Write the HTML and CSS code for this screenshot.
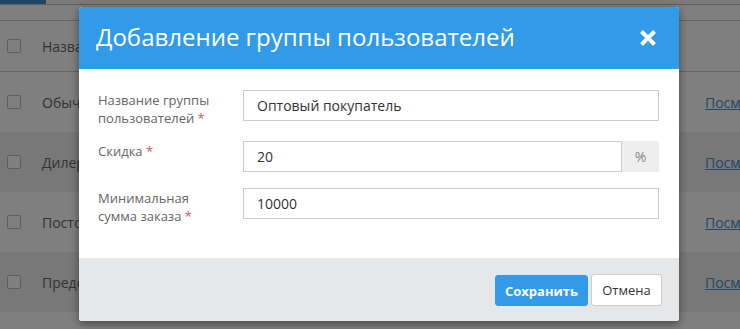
FILE: index.html
```html
<!DOCTYPE html>
<html lang="ru">
<head>
<meta charset="utf-8">
<title>Группы пользователей</title>
<link rel="stylesheet" href="styles.css">
</head>
<body>
<div class="page">
  <div class="topbar"><div class="tab"></div></div>
  <div class="table">
    <div class="row head">
      <div class="cell-check"><span class="checkbox"></span></div>
      <div class="cell-name">Название</div>
      <div class="cell-link"></div>
    </div>
    <div class="row">
      <div class="cell-check"><span class="checkbox"></span></div>
      <div class="cell-name">Обычный</div>
      <div class="cell-link"><a href="#">Посмотреть</a></div>
    </div>
    <div class="row alt">
      <div class="cell-check"><span class="checkbox"></span></div>
      <div class="cell-name">Дилер</div>
      <div class="cell-link"><a href="#">Посмотреть</a></div>
    </div>
    <div class="row">
      <div class="cell-check"><span class="checkbox"></span></div>
      <div class="cell-name">Постоянный</div>
      <div class="cell-link"><a href="#">Посмотреть</a></div>
    </div>
    <div class="row alt">
      <div class="cell-check"><span class="checkbox"></span></div>
      <div class="cell-name">Предоплата</div>
      <div class="cell-link"><a href="#">Посмотреть</a></div>
    </div>
    <div class="row tail"></div>
  </div>
</div>

<div class="overlay"></div>

<div class="modal">
  <div class="modal-header">
    <h1 class="modal-title">Добавление группы пользователей</h1>
    <button class="close" type="button" aria-label="Закрыть">
      <svg width="18" height="18" viewBox="0 0 18 18"><path d="M2.5 2.5L15.5 15.5M15.5 2.5L2.5 15.5" stroke="#fff" stroke-width="4" fill="none"/></svg>
    </button>
  </div>
  <div class="modal-body">
    <div class="form-row first">
      <label class="form-label">Название группы пользователей <span class="req">*</span></label>
      <div class="field"><input class="input" type="text" value="Оптовый покупатель"></div>
    </div>
    <div class="form-row">
      <label class="form-label">Скидка <span class="req">*</span></label>
      <div class="field group"><input class="input" type="text" value="20"><span class="addon">%</span></div>
    </div>
    <div class="form-row last">
      <label class="form-label">Минимальная сумма заказа <span class="req">*</span></label>
      <div class="field"><input class="input" type="text" value="10000"></div>
    </div>
  </div>
  <div class="modal-footer">
    <button class="btn btn-primary" type="button">Сохранить</button>
    <button class="btn btn-default" type="button">Отмена</button>
  </div>
</div>
</body>
</html>
```
FILE: styles.css
```css
html, body {
  margin: 0;
  padding: 0;
  height: 100%;
}
body {
  font-family: "Open Sans", "Noto Sans", sans-serif;
  background: #fff;
  overflow: hidden;
}
.page {
  width: 740px;
}
.topbar {
  height: 4px;
  border-bottom: 1px solid #bdbdbd;
  background: #f4f4f4;
}
.tab {
  width: 46px;
  height: 4px;
  background: #3c88cc;
}
.table {
  margin-top: 15px;
  border-top: 1px solid #c8c8c8;
}
.row {
  display: flex;
  align-items: center;
  height: 60px;
  font-size: 14px;
  color: #666;
}
.row.alt {
  background: #f0f0f0;
}
.row.tail {
  height: 17px;
}
.row.head {
  height: 50px;
  border-bottom: 1px solid #c8c8c8;
}
.cell-check {
  width: 35px;
  padding-left: 7px;
  display: flex;
  align-items: center;
}
.checkbox {
  width: 12px;
  height: 12px;
  border: 1px solid #bbb;
  border-radius: 2px;
  background: #fff;
}
.cell-name {
  flex: 1;
}
.cell-link {
  width: 35px;
  overflow: hidden;
  white-space: nowrap;
}
.cell-link a {
  color: #4a8fd0;
  text-decoration: underline;
}
.overlay {
  position: absolute;
  left: 0;
  top: 0;
  width: 100%;
  height: 100%;
  background: rgba(0, 0, 0, 0.5);
}
.modal {
  position: absolute;
  left: 79px;
  top: 7px;
  width: 600px;
  background: #fff;
  border-radius: 3px;
  box-shadow: 0 3px 9px rgba(0, 0, 0, 0.45);
  overflow: hidden;
}
.modal-header {
  height: 62px;
  background: #319bea;
  display: flex;
  align-items: center;
  justify-content: space-between;
  padding: 0 22px 0 17px;
}
.modal-title {
  margin: 0;
  font-size: 24px;
  font-weight: 400;
  color: #fff;
  line-height: 32px;
  position: relative;
  top: -1px;
}
.close {
  border: 0;
  background: transparent;
  padding: 0;
  width: 18px;
  height: 18px;
  display: flex;
}
.modal-body {
  padding: 21px 20px 33px 19px;
}
.form-row {
  display: flex;
  align-items: flex-start;
  margin-bottom: 16px;
}
.form-row.first {
  margin-bottom: 14px;
}
.form-row.last {
  margin-bottom: 0;
}
.form-label {
  width: 145px;
  flex: none;
  font-size: 13px;
  line-height: 18px;
  color: #666;
  padding: 1px 20px 0 0;
  box-sizing: border-box;
}
.req {
  color: #e05050;
}
.field {
  flex: 1;
  display: flex;
}
.input {
  flex: 1;
  min-width: 0;
  height: 31px;
  box-sizing: border-box;
  border: 1px solid #ccc;
  border-radius: 0;
  padding: 0 13px;
  font-family: "Open Sans", "Noto Sans", sans-serif;
  font-size: 14px;
  color: #333;
  background: #fff;
  outline: none;
}
.addon {
  width: 37px;
  height: 31px;
  flex: none;
  background: #eee;
  color: #888;
  font-size: 14px;
  display: flex;
  align-items: center;
  justify-content: center;
}
.modal-footer {
  background: #e6e7e8;
  height: 63px;
  box-sizing: border-box;
  padding: 16px 17px 0 0;
  display: flex;
  justify-content: flex-end;
  align-items: flex-start;
  gap: 3px;
}
.btn {
  font-family: "Open Sans", "Noto Sans", sans-serif;
  font-size: 13px;
  height: 32px;
  border-radius: 3px;
  padding: 0;
  cursor: pointer;
}
.btn-primary {
  width: 93px;
  margin-top: 1px;
  height: 31px;
  background: #319bea;
  border: 1px solid #319bea;
  color: #fff;
  font-weight: 700;
}
.btn-default {
  width: 71px;
  background: #fff;
  border: 1px solid #ccc;
  color: #333;
}
```
